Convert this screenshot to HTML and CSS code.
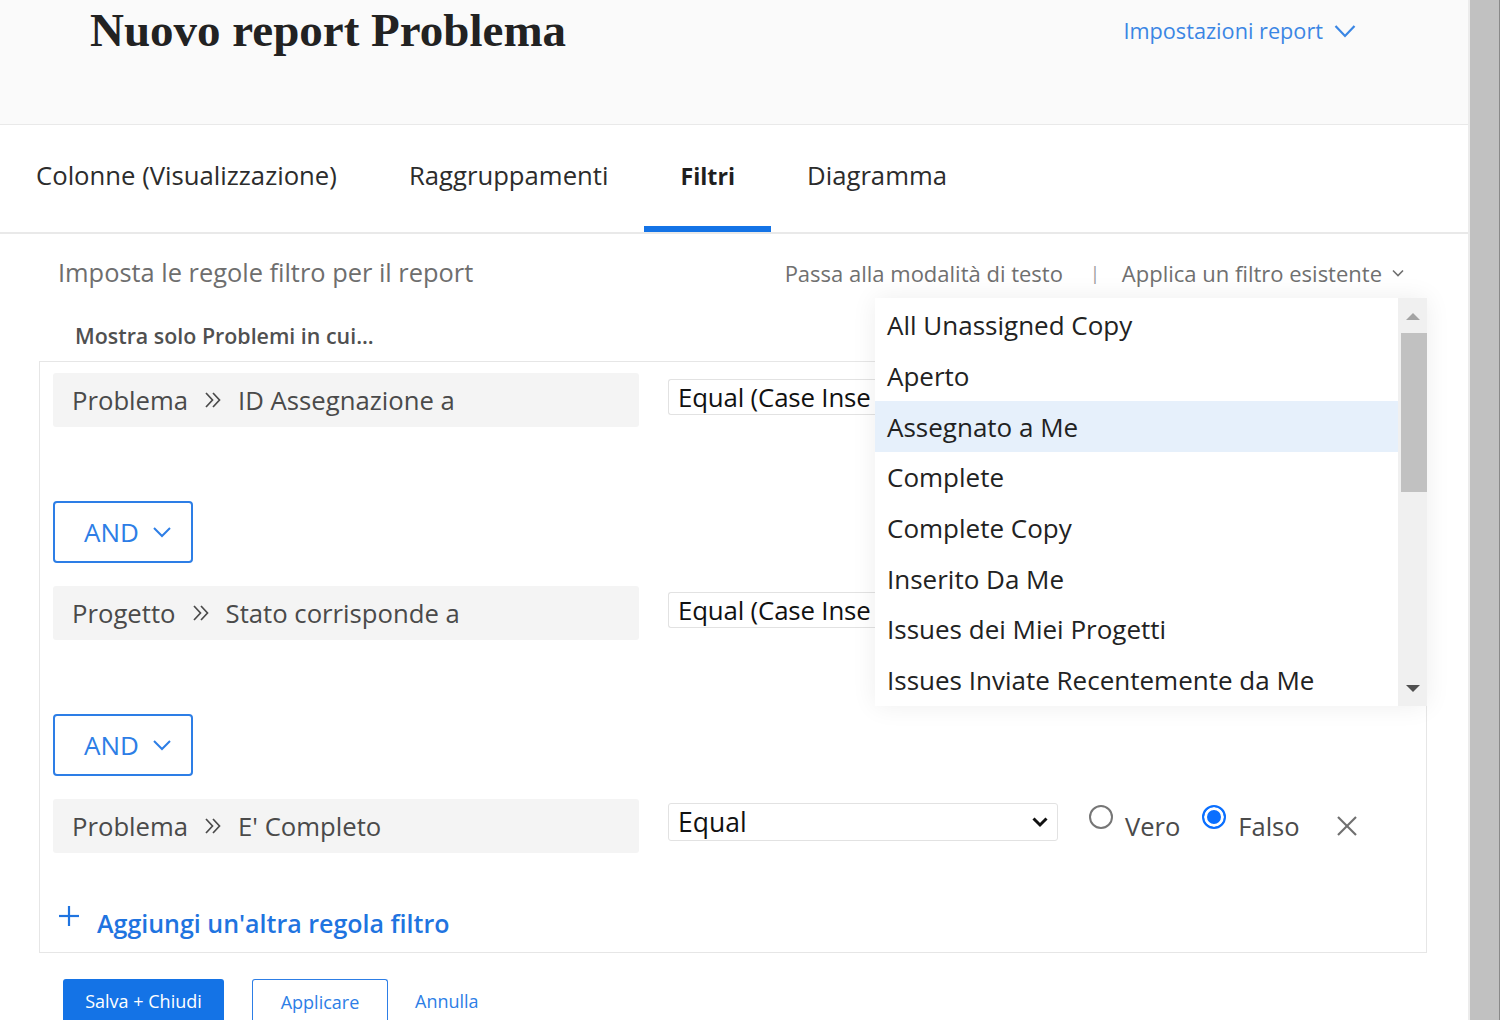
FILE: index.html
```html
<!DOCTYPE html>
<html lang="it">
<head>
<meta charset="utf-8">
<title>Nuovo report Problema</title>
<link rel="stylesheet" href="styles.css">
</head>
<body>
<div class="app">
  <div class="main">
    <header class="top">
      <h1 class="title">Nuovo report Problema</h1>
      <a class="settings">Impostazioni report
        <svg class="settings-chev" width="22" height="14" viewBox="0 0 22 14"><polyline points="1.5,2 11,12 20.5,2" fill="none" stroke="currentColor" stroke-width="2.2"/></svg>
      </a>
    </header>

    <nav class="tabs">
      <span class="tab">Colonne (Visualizzazione)</span>
      <span class="tab">Raggruppamenti</span>
      <span class="tab active">Filtri</span>
      <span class="tab">Diagramma</span>
    </nav>

    <section class="content">
      <div class="toolbar">
        <span class="intro">Imposta le regole filtro per il report</span>
        <div class="actions">
          <span>Passa alla modalità di testo</span>
          <span class="sep">|</span>
          <span class="apply">Applica un filtro esistente
            <svg width="14" height="10" viewBox="0 0 14 10"><polyline points="2,2.5 7,7.5 12,2.5" fill="none" stroke="currentColor" stroke-width="1.6"/></svg>
          </span>
        </div>
      </div>

      <div class="show-only">Mostra solo Problemi in cui...</div>

      <div class="panel">
        <div class="rule">
          <div class="field">Problema
            <svg class="dbl" width="20" height="20" viewBox="0 0 20 20"><polyline points="3,3 9.5,10 3,17" fill="none" stroke="currentColor" stroke-width="1.7"/><polyline points="10,3 16.5,10 10,17" fill="none" stroke="currentColor" stroke-width="1.7"/></svg>
            ID Assegnazione a</div>
          <div class="select short">Equal (Case Inse</div>
        </div>

        <button class="and">AND
          <svg width="20" height="12" viewBox="0 0 20 12"><polyline points="2,2 10,10 18,2" fill="none" stroke="currentColor" stroke-width="2"/></svg>
        </button>

        <div class="rule">
          <div class="field">Progetto
            <svg class="dbl" width="20" height="20" viewBox="0 0 20 20"><polyline points="3,3 9.5,10 3,17" fill="none" stroke="currentColor" stroke-width="1.7"/><polyline points="10,3 16.5,10 10,17" fill="none" stroke="currentColor" stroke-width="1.7"/></svg>
            Stato corrisponde a</div>
          <div class="select short">Equal (Case Inse</div>
        </div>

        <button class="and">AND
          <svg width="20" height="12" viewBox="0 0 20 12"><polyline points="2,2 10,10 18,2" fill="none" stroke="currentColor" stroke-width="2"/></svg>
        </button>

        <div class="rule last">
          <div class="field">Problema
            <svg class="dbl" width="20" height="20" viewBox="0 0 20 20"><polyline points="3,3 9.5,10 3,17" fill="none" stroke="currentColor" stroke-width="1.7"/><polyline points="10,3 16.5,10 10,17" fill="none" stroke="currentColor" stroke-width="1.7"/></svg>
            E' Completo</div>
          <div class="select full">Equal
            <svg class="sel-chev" width="18" height="12" viewBox="0 0 18 12"><polyline points="2.5,2.5 9,9 15.5,2.5" fill="none" stroke="currentColor" stroke-width="3"/></svg>
          </div>
          <label class="radio"><span class="dot"></span><span class="rlabel">Vero</span></label>
          <label class="radio"><span class="dot checked"></span><span class="rlabel">Falso</span></label>
          <svg class="close" width="22" height="22" viewBox="0 0 22 22"><line x1="2" y1="2" x2="20" y2="20" stroke="currentColor" stroke-width="2.2"/><line x1="20" y1="2" x2="2" y2="20" stroke="currentColor" stroke-width="2.2"/></svg>
        </div>

        <a class="add">
          <svg width="22" height="22" viewBox="0 0 22 22"><line x1="11" y1="1" x2="11" y2="21" stroke="currentColor" stroke-width="2.2"/><line x1="1" y1="11" x2="21" y2="11" stroke="currentColor" stroke-width="2.2"/></svg>
          <span>Aggiungi un'altra regola filtro</span>
        </a>
      </div>

      <div class="buttons">
        <button class="btn primary">Salva + Chiudi</button>
        <button class="btn outline">Applicare</button>
        <button class="btn link">Annulla</button>
      </div>

      <div class="dropdown">
        <ul class="options">
          <li>All Unassigned Copy</li>
          <li>Aperto</li>
          <li class="hl">Assegnato a Me</li>
          <li>Complete</li>
          <li>Complete Copy</li>
          <li>Inserito Da Me</li>
          <li>Issues dei Miei Progetti</li>
          <li>Issues Inviate Recentemente da Me</li>
        </ul>
        <div class="vscroll">
          <span class="arrow up"></span>
          <span class="thumb"></span>
          <span class="arrow down"></span>
        </div>
      </div>
    </section>
  </div>
  <div class="strip"></div>
</div>
</body>
</html>
```

FILE: styles.css
```css
* { box-sizing: border-box; }
html, body { margin: 0; padding: 0; }
body {
  font-family: "Open Sans", "Liberation Sans", sans-serif;
  color: #2c2c2c;
  background: #fff;
  width: 1500px;
  height: 1020px;
  overflow: hidden;
}
.app { display: flex; height: 1020px; }
.main { width: 1468px; display: flex; flex-direction: column; overflow: hidden; }
.strip {
  width: 32px;
  background: #c1c1c1;
  border-left: 2px solid #ececec;
  border-right: 1px solid #8a8a8a;
}

/* header */
.top {
  flex-shrink: 0;
  height: 125px;
  background: #fafafa;
  border-bottom: 1px solid #e9e9e9;
  display: flex;
  justify-content: space-between;
  align-items: flex-start;
  padding: 0 112px 0 90px;
}
.title {
  margin: 0;
  padding-top: 4px;
  font-family: "Liberation Serif", "Times New Roman", serif;
  font-weight: bold;
  font-size: 47px;
  line-height: 52px;
  color: #222;
}
.settings {
  margin-top: 16px;
  display: flex;
  align-items: center;
  gap: 11px;
  color: #3a86e4;
  font-size: 21.7px;
  line-height: 30px;
}

/* tabs */
.tabs {
  flex-shrink: 0;
  height: 109px;
  display: flex;
  border-bottom: 2px solid #e9e9e9;
}
.tab {
  padding: 0 36px;
  display: flex;
  align-items: center;
  font-size: 25.7px;
  color: #2c2c2c;
  border-bottom: 6px solid transparent;
}
.tab.active { font-weight: 700; font-size: 23.2px; border-bottom-color: #1473e6; color: #1f1f1f; }

/* content */
.content { position: relative; padding: 0 41px 0 39px; flex: 1 0 auto; }
.toolbar {
  height: 76px;
  display: flex;
  justify-content: space-between;
  align-items: center;
  padding: 0 22px 0 19px;
}
.intro { font-size: 25.4px; color: #6e6e6e; }
.actions { display: flex; align-items: center; font-size: 22px; color: #707070; padding-top: 2px; }
.sep { margin: 0 22px 0 27px; color: #9a9a9a; font-size: 18px; }
.apply { display: flex; align-items: center; gap: 9px; }

.show-only {
  font-size: 21.4px;
  font-weight: 600;
  color: #505050;
  padding: 11px 0 0 36px;
  height: 51px;
}

.panel {
  border: 1px solid #e6e6e6;
  height: 592px;
  padding: 11px 13px 0 13px;
  display: flex;
  flex-direction: column;
  align-items: flex-start;
}
.rule { display: flex; align-items: center; margin-bottom: 74px; }
.rule.last { margin-bottom: 50px; }
.field {
  width: 586px;
  height: 54px;
  background: #f4f4f4;
  border-radius: 3px;
  display: flex;
  align-items: center;
  padding-left: 19px;
  font-size: 25.7px;
  color: #4a4a4a;
  white-space: nowrap;
}
.dbl { margin: 0 15px 0 15px; color: #4a4a4a; }
.select {
  align-self: flex-start;
  margin-left: 29px;
  border: 1px solid #e2e2e2;
  border-radius: 3px;
  background: #fff;
  display: flex;
  align-items: center;
  padding: 0 8px 0 9px;
  font-size: 26.5px;
  color: #111;
  white-space: nowrap;
  overflow: hidden;
}
.select.full { width: 390px; height: 38px; margin-top: 4px; justify-content: space-between; }
.select.short {
  width: 207px;
  height: 36px;
  margin-top: 6px;
  border-right: none;
  border-radius: 3px 0 0 3px;
  padding-right: 0;
  font-size: 25.8px;
  letter-spacing: -0.15px;
}
.sel-chev { color: #111; flex-shrink: 0; }
.radio { display: flex; align-items: flex-end; gap: 12px; margin-left: 31px; font-size: 25.5px; color: #4a4a4a; }
.radio + .radio { margin-left: 22px; }
.dot {
  width: 24px; height: 24px;
  border-radius: 50%;
  border: 2px solid #767676;
  align-self: flex-start;
  margin-top: -6px;
  background: #fff;
}
.dot.checked { border: 2px solid #0a6fff; box-shadow: inset 0 0 0 3px #fff; background: #0a6fff; }
.rlabel { line-height: 30px; padding-top: 0; }
.close { margin-left: 36px; margin-top: 0; color: #6f6f6f; }

.and {
  width: 140px;
  height: 62px;
  border: 2px solid #2d7ee6;
  border-radius: 4px;
  background: #fff;
  color: #2d7ee6;
  font-family: inherit;
  font-size: 26px;
  display: flex;
  align-items: center;
  justify-content: center;
  gap: 13px;
  margin-bottom: 23px;
  padding: 0 0 0 10px;
}
.add {
  display: flex;
  align-items: center;
  gap: 17px;
  color: #1f74e0;
  font-size: 25px;
  font-weight: 600;
  padding-left: 5px;
  padding-top: 3px;
}
.add svg { margin-top: -14px; }

.buttons { display: flex; align-items: flex-start; padding: 26px 0 0 24px; gap: 0; }
.btn {
  font-family: inherit;
  font-size: 18px;
  height: 44px;
  border-radius: 3px 3px 0 0;
  padding: 0;
  background: #fff;
  color: #2d7ee6;
  border: none;
}
.btn.primary { width: 161px; background: #1473e6; color: #fff; }
.btn.outline { width: 136px; margin-left: 28px; border: 1px solid #2d7ee6; border-bottom: none; }
.btn.link { margin-left: 27px; }

/* dropdown overlay */
.dropdown {
  position: absolute;
  left: 875px;
  top: 64px;
  width: 552px;
  height: 408px;
  display: flex;
  background: #fff;
  box-shadow: 0 0 24px rgba(0,0,0,0.07);
}
.options { list-style: none; margin: 0; padding: 2px 0 0 0; width: 523px; }
.options li {
  height: 50.7px;
  display: flex;
  align-items: center;
  padding-left: 12px;
  font-size: 26px;
  color: #222;
}
.options li.hl { background: #e6f0fb; }
.vscroll {
  width: 29px;
  background: #f0f0f0;
  display: flex;
  flex-direction: column;
  align-items: center;
}
.arrow { width: 0; height: 0; border-left: 7px solid transparent; border-right: 7px solid transparent; }
.arrow.up { border-bottom: 7px solid #a3a3a3; margin-top: 15px; }
.arrow.down { border-top: 7px solid #505050; margin-top: auto; margin-bottom: 14px; }
.thumb { width: 26px; margin-left: 3px; height: 159px; background: #c1c1c1; margin-top: 13px; }
```
